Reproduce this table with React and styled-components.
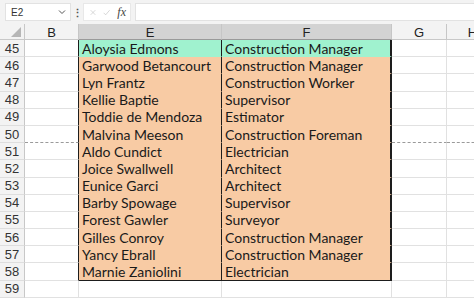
import React from "react";
import styled, { createGlobalStyle } from "styled-components";

const Global = createGlobalStyle`
  html, body { margin: 0; padding: 0; background: #ffffff; }
  body { width: 474px; height: 300px; overflow: hidden; font-family: "Lato", "Liberation Sans", sans-serif; }
`;

const Page = styled.div`
  display: flex;
  flex-direction: column;
  width: 474px;
  height: 300px;
  overflow: hidden;
  background: #ffffff;
`;

const FormulaBar = styled.div`
  display: flex;
  align-items: center;
  height: 24px;
  padding: 0 0 0 5px;
  background: #f3f3f3;
  box-sizing: border-box;
  flex: none;
`;

const NameBox = styled.div`
  display: flex;
  align-items: center;
  justify-content: space-between;
  width: 66px;
  height: 18px;
  box-sizing: border-box;
  padding: 0 4px 0 5px;
  background: #ffffff;
  border: 1px solid #e2e2e2;
  font-size: 10px;
  color: #333;
  font-family: "Liberation Sans", sans-serif;
`;

const Dots = styled.div`
  width: 12px;
  display: flex;
  justify-content: center;
  color: #555;
  font-size: 11px;
  font-weight: bold;
  line-height: 1;
`;

const ActionBox = styled.div`
  display: flex;
  align-items: center;
  gap: 7px;
  height: 18px;
  width: 48px;
  padding: 0 4px 0 6px;
  box-sizing: border-box;
  background: #ffffff;
  border: 1px solid #e8e8e8;
`;

const Fx = styled.span`
  font-family: "Liberation Serif", serif;
  font-style: italic;
  font-size: 12px;
  color: #444;
`;

const FormulaInput = styled.div`
  flex: 1;
  height: 18px;
  margin-left: 4px;
  background: #ffffff;
  border: 1px solid #e2e2e2;
  border-right: none;
  box-sizing: border-box;
`;

const Sheet = styled.div`
  display: grid;
  grid-template-columns: 25px 54px 143px 170px 55px 52px;
  grid-template-rows: 16px;
  grid-auto-rows: 17.2px;
  flex: 1;
  overflow: hidden;
`;

const Corner = styled.div`
  position: relative;
  background: #f3f3f3;
  border-right: 1px solid #c8c8c8;
  border-bottom: 1px solid #c8c8c8;
  box-sizing: border-box;
  &::after {
    content: "";
    position: absolute;
    right: 3px;
    bottom: 2px;
    width: 0;
    height: 0;
    border-left: 10px solid transparent;
    border-bottom: 10px solid #b6b6b6;
  }
`;

const ColHead = styled.div`
  display: flex;
  align-items: center;
  justify-content: center;
  background: ${(p) => (p.$active ? "#d3d3d3" : "#f3f3f3")};
  border-right: 1px solid #c6c6c6;
  border-bottom: 1px solid ${(p) => (p.$active ? "#9a9a9a" : "#c8c8c8")};
  box-sizing: border-box;
  font-family: "Liberation Sans", sans-serif;
  font-size: 13px;
  color: #222;
  padding-top: 1px;
`;

const RowHead = styled.div`
  display: flex;
  align-items: center;
  justify-content: center;
  background: #f3f3f3;
  border-right: 1px solid #c8c8c8;
  border-bottom: 1px solid #dedede;
  box-sizing: border-box;
  font-family: "Liberation Sans", sans-serif;
  font-size: 13px;
  color: #333;
`;

const Cell = styled.div`
  display: flex;
  align-items: center;
  padding-left: 3px;
  box-sizing: border-box;
  background: ${(p) => p.$fill || "#ffffff"};
  border-right: ${(p) => p.$right || "1px solid #e1e1e1"};
  border-bottom: ${(p) => p.$bottom || "1px solid #e1e1e1"};
  font-size: 14px;
  color: #1a1a1a;
  white-space: nowrap;
  overflow: hidden;
`;

const rows = [
  [45, "Aloysia Edmons", "Construction Manager"],
  [46, "Garwood Betancourt", "Construction Manager"],
  [47, "Lyn Frantz", "Construction Worker"],
  [48, "Kellie Baptie", "Supervisor"],
  [49, "Toddie de Mendoza", "Estimator"],
  [50, "Malvina Meeson", "Construction Foreman"],
  [51, "Aldo Cundict", "Electrician"],
  [52, "Joice Swallwell", "Architect"],
  [53, "Eunice Garci", "Architect"],
  [54, "Barby Spowage", "Supervisor"],
  [55, "Forest Gawler", "Surveyor"],
  [56, "Gilles Conroy", "Construction Manager"],
  [57, "Yancy Ebrall", "Construction Manager"],
  [58, "Marnie Zaniolini", "Electrician"],
  [59, "", ""],
];

const DARK = "1.5px solid #1d1d1d";
const GRID = "1px solid #e1e1e1";
const BREAK = "1px dashed #9a9a9a";

export default function App() {
  return (
    <Page>
      <Global />
      <FormulaBar>
        <NameBox>
          <span>E2</span>
          <svg width="8" height="6" viewBox="0 0 8 6">
            <path d="M1 1.5 L4 4.5 L7 1.5" fill="none" stroke="#555" strokeWidth="1" />
          </svg>
        </NameBox>
        <Dots>⋮</Dots>
        <ActionBox>
          <svg width="9" height="9" viewBox="0 0 9 9">
            <path d="M1 1 L8 8 M8 1 L1 8" stroke="#c4c4c4" strokeWidth="1" />
          </svg>
          <svg width="11" height="9" viewBox="0 0 11 9">
            <path d="M1 5 L4 8 L10 1" fill="none" stroke="#c4c4c4" strokeWidth="1" />
          </svg>
          <Fx>fx</Fx>
        </ActionBox>
        <FormulaInput />
      </FormulaBar>
      <Sheet>
        <Corner />
        <ColHead>B</ColHead>
        <ColHead $active>E</ColHead>
        <ColHead $active>F</ColHead>
        <ColHead>G</ColHead>
        <ColHead>H</ColHead>
        {rows.map(([n, name, role], i) => {
          const inBlock = name !== "";
          const first = i === 0;
          const last = i === rows.length - 2;
          const isBreak = n === 50;
          const fill = first ? "#a0f2cf" : "#f8cba4";
          const plainBottom = isBreak ? BREAK : GRID;
          const blockBottom = last ? DARK : "1px solid transparent";
          return (
            <React.Fragment key={n}>
              <RowHead>{n}</RowHead>
              <Cell $right={inBlock ? DARK : GRID} $bottom={plainBottom} />
              <Cell $fill={inBlock ? fill : undefined} $right={inBlock ? DARK : GRID} $bottom={inBlock ? blockBottom : GRID}>
                {name}
              </Cell>
              <Cell $fill={inBlock ? fill : undefined} $right={inBlock ? "2px solid #1d1d1d" : GRID} $bottom={inBlock ? blockBottom : GRID}>
                {role}
              </Cell>
              <Cell $bottom={plainBottom} />
              <Cell $bottom={plainBottom} />
            </React.Fragment>
          );
        })}
      </Sheet>
    </Page>
  );
}
